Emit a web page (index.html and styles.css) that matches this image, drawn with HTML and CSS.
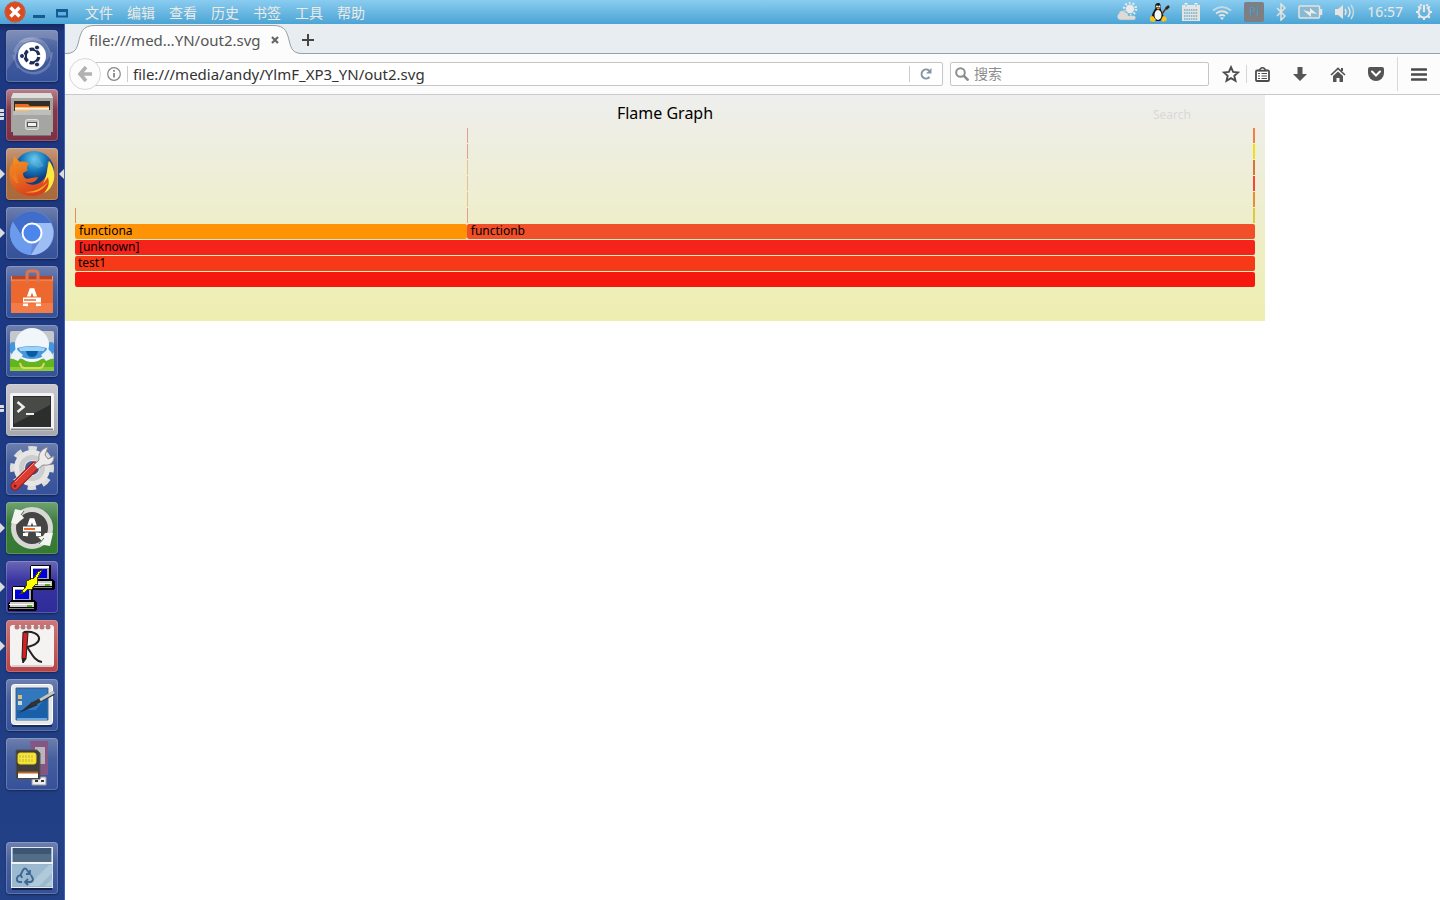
FILE: index.html
```html
<!DOCTYPE html>
<html lang="zh-CN">
<head>
  <meta charset="UTF-8">
  <meta name="viewport" content="width=device-width, initial-scale=1.0">
  <title>Flame Graph</title>
  <link rel="stylesheet" href="styles.css">
</head>
<body>
  <header class="panel">
    <div class="window-controls">
      <button class="win-btn close" aria-label="关闭"><svg width="22" height="22" viewBox="0 0 22 22"><circle cx="11" cy="11" r="10.5" fill="#dc4a20"/><circle cx="11" cy="11" r="10" fill="none" stroke="#b8654c"/><path d="M6.5 6.5l9 9M15.500 6.500l-9 9" stroke="#fff" stroke-width="3.400"/></svg></button>
      <button class="win-btn" aria-label="最小化"><svg width="12" height="14" viewBox="0 0 12 14"><path d="M0 10h12v3H0z" fill="#175a91"/></svg></button>
      <button class="win-btn" aria-label="最大化"><svg width="12" height="14" viewBox="0 0 12 14"><path d="M1 5h10v6.500H1z" fill="#5fb2df" stroke="#175a91" stroke-width="2"/><path d="M0 5.500h12" stroke="#175a91" stroke-width="3"/></svg></button>
    </div>
    <nav class="menus">
      <button>文件</button>
      <button>编辑</button>
      <button>查看</button>
      <button>历史</button>
      <button>书签</button>
      <button>工具</button>
      <button>帮助</button>
    </nav>
    <div class="tray">
      <svg width="22" height="20" viewBox="0 0 22 20"><circle cx="14" cy="7" r="6" fill="none" stroke="#eceae6" stroke-width="2.500" stroke-dasharray="1.700 2.070"/><circle cx="14" cy="7" r="4.200" fill="#eceae6"/><path d="M4 18a3.500 3.500 0 0 1-1-6.500C3 8 8 7.500 9.500 10.500c2 0 3 1.500 2.500 3h6a2.300 2.300 0 0 1 0 4.500z" fill="#dfdbd2" stroke="#6cb7e0" stroke-width=".6"/></svg>
      <svg width="20" height="20" viewBox="0 0 20 20"><path d="M8 1c-3 0-3 3-2.500 5C4 9 2 11 2 14c0 3 3 5 6 5s6-2 5.500-5C13 11 11 9 10.500 6 10.800 3 10.500 1 8 1z" fill="#171717"/><ellipse cx="8" cy="13" rx="3.500" ry="5" fill="#f5f5f5"/><circle cx="7" cy="4.500" r="1" fill="#fff"/><circle cx="9.300" cy="4.500" r="1" fill="#fff"/><path d="M6.500 6l2-.5 1.500 1-2 1.200z" fill="#f3a31f"/><path d="M0 15l3-1 3 4-2 2-4-1zM16 15l-3-1-2 4 2 2 4-2z" fill="#f7c519"/><path d="M12 12l5-7" stroke="#63341d" stroke-width="1.500"/><path d="M16 7l3-3" stroke="#3b2316" stroke-width="2.500"/></svg>
      <svg width="18" height="18" viewBox="0 0 18 18"><path d="M0 2h18v16H0z" fill="#e6e4df"/><path d="M2 7h14M2 10h14M2 13h14M2 16h14" stroke="#6eaed2" stroke-dasharray="1.500 .8" stroke-width="1.500"/><path d="M4 0v4M14 0v4" stroke="#fff" stroke-width="2.500"/><path d="M4 1v3M14 1v3" stroke="#77a9c3"/></svg>
      <svg width="20" height="16" viewBox="0 0 20 16"><g fill="none" stroke="#e7e4dd" stroke-width="1.800"><path d="M1 6.500Q10-.5 19 6.500" stroke="#c4dbe3"/><path d="M4 9.500q6-4.500 12 0M7 12q3-2 6 0"/></g><path d="M8 13.500h4L10 16z" fill="#eee"/></svg>
      <span class="pi">Pi</span>
      <svg width="10" height="18" viewBox="0 0 10 18"><path d="M1 5l8 8-4 4V1l4 4-8 8" fill="none" stroke="#e7e4dd" stroke-width="1.500"/></svg>
      <svg width="25" height="14" viewBox="0 0 25 14"><rect x="1" y="1" width="20.500" height="12" rx="1" fill="#88bad2" stroke="#e7e4dd" stroke-width="1.500"/><path d="M23 4v6" stroke="#e7e4dd" stroke-width="2.500"/><path d="M5 5l7 2V3l7 6-6-1v4z" fill="#f0ede8"/></svg>
      <svg width="20" height="16" viewBox="0 0 20 16"><path d="M0 5h3l5-4v14l-5-4H0z" fill="#e7e4dd"/><g fill="none" stroke="#e7e4dd" stroke-width="1.500"><path d="M10 5q2 3 0 6M13 3q4 5 0 10"/><path d="M16 1q5 7 0 14" stroke="#c4dbe3"/></g></svg>
      <span class="clock">16:57</span>
      <svg width="18" height="18" viewBox="0 0 18 18"><g fill="none" stroke="#eceae6" stroke-width="2"><path d="M6 4.400a5.500 5.500 0 1 0 6 0M9 2v7"/><path d="M1 9h2.500M14.500 9H17M9 14.500V17M3.300 3.300L5 5M13 5l1.700-1.700M3.300 14.700L5 13M13 13l1.700 1.700M5.600 1.200l.8 2M12.400 1.200l-.8 2"/></g></svg>
    </div>
  </header>

  <div class="desktop">
    <aside class="launcher">
      <button class="tile" aria-label="Dash"><svg viewBox="0 0 52 52"><g fill="none" stroke="#c4ccdf" stroke-opacity=".3" stroke-width="1.500"><path d="M8 22C14 2 44 2 45 30M12 38C2 18 20 4 38 12M44 34C34 50 13 46 7 25M46 22c0 22-24 26-34 14"/></g><path d="M1 1h50v10Q20 0 8 30L1 40z" fill="#fff" opacity=".13"/><path d="M12 12a20 20 0 0 1 32 14l-4 6-5-18z" fill="#fff" opacity=".15"/><circle cx="26" cy="26" r="14" fill="#fff"/><circle cx="26" cy="26" r="6.800" fill="none" stroke="#1d2c59" stroke-width="3.300" stroke-dasharray="12 2.240" stroke-dashoffset="-1"/><g fill="#1d2c59" stroke="#fff"><circle cx="16" cy="26" r="2.500"/><circle cx="31" cy="17.500" r="2.500"/><circle cx="31" cy="34.500" r="2.500"/></g></svg></button>
      <button class="tile red" aria-label="文件管理器"><i class="pip triple"></i><svg viewBox="0 0 52 52"><path d="M7 4h38l2 5v34H5V9z" fill="#a3a3a0"/><path d="M7 4h38l2 5H5z" fill="#dededb"/><path d="M8 12h36v12H8z" fill="#332d2a"/><path d="M9 15h13l2 2h19v7H9z" fill="#e96b24"/><path d="M9 18h34v4H9z" fill="#f8bd70"/><path d="M9 19h34v1.500H9z" fill="#faf2e6"/><path d="M7 22h16l3-1h19v26H7z" fill="#a5a5a2"/><path d="M7 22h16l3-1h19v5H7z" fill="#bebebb"/><path d="M7 46.500h38" stroke="#777"/><rect x="19.500" y="30.500" width="13" height="10" rx="2" fill="#bdbdba" stroke="#e2e2df"/><rect x="21.500" y="33.500" width="9" height="4" fill="#f3f3f3" stroke="#555"/></svg></button>
      <button class="tile brown" aria-label="Firefox"><i class="pip"></i><i class="pip active"></i><svg viewBox="0 0 52 52"><defs><radialGradient id="globe" cx=".5" cy=".2"><stop offset="0" stop-color="#65cbec"/><stop offset=".6" stop-color="#1678ba"/><stop offset="1" stop-color="#103d82"/></radialGradient><linearGradient id="fox" x2=".4" y2="1"><stop offset="0" stop-color="#f49a22"/><stop offset="1" stop-color="#d9401d"/></linearGradient></defs><circle cx="28" cy="23" r="20" fill="url(#globe)"/><path d="M30 6q-6 5-5 10l7 4 6-2 4 6" fill="#74bddf" opacity=".35"/><path d="M42 13c7 8 8 22-3 31-10 7-25 5-32-5C2 30 2 19 7 14l1-6 6 6c4-1 8 0 9 2-2 1-3 5-1 6l-5 3c0 5 4 7 8 5l7-1c-1 5-8 7-13 5 9 7 20-1 22-8z" fill="url(#fox)"/><path d="M43 13c9 11 6 27-5 32 6-7 5-11 4-16l-5 7c4-8 4-14 6-23z" fill="#ffe83f"/><path d="M42 34c-5 9-13 12-23 10 11 0 18-5 23-10z" fill="#f3a724"/><path d="M7 15c-3 8-1 15 5 20M12 16c-4 5-4 12-1 16" fill="none" stroke="#ee7b22" stroke-width="2"/></svg></button>
      <button class="tile" aria-label="Chromium"><i class="pip"></i><svg viewBox="0 0 52 52"><circle cx="26" cy="26" r="22" fill="#6389db"/><path d="M7 15A22 22 0 0 1 45 16H26L16 29z" fill="#3f6dc9"/><path d="M7 15l10 16 9 5-1 12A22 22 0 0 1 7 15z" fill="#6b9bec"/><path d="M45 16H26l10 10-3 9-8 13A22 22 0 0 0 45 16z" fill="#9dbdf5"/><circle cx="26" cy="26" r="9.500" fill="#4c86ed" stroke="#fff" stroke-width="2"/></svg></button>
      <button class="tile" aria-label="Ubuntu 软件"><svg viewBox="0 0 52 52"><path d="M5 10h42l-2 5H7z" fill="#be451e"/><path d="M5 14h42v33H5z" fill="#ed682e"/><path d="M5 37h42v10H5z" fill="#f37c46"/><path d="M5 14h42M5.500 10v5M46.500 10v5" stroke="#f7956a"/><path d="M21 17V8q0-3 3-3h5q3 0 3 3v9" fill="none" stroke="#df754f" stroke-width="3"/><g fill="none" stroke="#fff" stroke-width="3.500"><path d="M19.500 40l5.500-16h2l5.500 16"/><path d="M17 38.500h5M30 38.500h5" stroke-width="3"/></g><path d="M17 34h18" stroke="#ed682e" stroke-width="7"/><path d="M17 34h18" stroke="#fff" stroke-width="5"/><path d="M18 34h12" stroke="#ed682e" stroke-width="1.500"/></svg></button>
      <button class="tile" aria-label="优客助手"><svg viewBox="0 0 52 52"><rect x="4" y="6" width="44" height="40" rx="2" fill="#c4c8cc"/><path d="M4 34h44v12H4z" fill="#61b51e"/><path d="M4 42h44v4H4z" fill="#8ccc35"/><rect x="4" y="17" width="6" height="12" rx="3" fill="#4296df"/><rect x="42" y="17" width="6" height="12" rx="3" fill="#4296df"/><ellipse cx="26" cy="20" rx="17" ry="17" fill="#f1f6fa"/><path d="M11 23q15-4 30 0-1 11-15 11T11 23z" fill="#4697db"/><path d="M13 23q13-3 26 0l-1 3H14z" fill="#9dd3f8"/><path d="M20 26h12q-1 6-6 6t-6-6z" fill="#075c9f"/><path d="M10 24q-5 4-5 9l7 3 5-6zM42 24q5 4 5 9l-7 3-5-6z" fill="#eaf3fb"/><path d="M14 38q1 5 5 5h14q4 0 5-5" fill="none" stroke="#e2d568" stroke-width="2"/></svg></button>
      <button class="tile gray" aria-label="终端"><i class="pip double"></i><svg viewBox="0 0 52 52"><rect x="4" y="9" width="44" height="38" rx="2" fill="#f3f3f3"/><path d="M5 45.500h42" stroke="#888" stroke-width="2"/><path d="M7 12h38v31H7z" fill="#2c2e2d"/><path d="M8 13h36v8L8 40z" fill="#484a48"/><path d="M11.500 18l6 5-6 5" fill="none" stroke="#eee" stroke-width="2.500"/><path d="M20 30h8" stroke="#eee" stroke-width="2"/></svg></button>
      <button class="tile" aria-label="系统设置"><svg viewBox="0 0 52 52"><circle cx="26" cy="25" r="18.500" fill="none" stroke="#dededc" stroke-width="7" stroke-dasharray="8 6.530" stroke-dashoffset="4"/><circle cx="26" cy="25" r="12.500" fill="none" stroke="#e6e6e4" stroke-width="11"/><circle cx="26" cy="25" r="10.500" fill="none" stroke="#cbcdce" stroke-width="5"/><path d="M29 23L9 43" stroke="#8e1818" stroke-width="9" stroke-linecap="round"/><path d="M29 23L9 43" stroke="#dc3c32" stroke-width="7" stroke-linecap="round"/><path d="M28 20L9 39" stroke="#fb9186"/><path d="M28 22l5-5c-1-6 2-11 9-13l-3 8 3 4 6-3c0 7-4 10-11 9l-5 4z" fill="#ecebea" stroke="#8b8b8b"/><circle cx="9" cy="43" r="1.500" fill="#821716"/></svg></button>
      <button class="tile green" aria-label="软件更新器"><i class="pip"></i><svg viewBox="0 0 52 52"><circle cx="26" cy="26" r="18.500" fill="#454545" stroke="#d7d7d4" stroke-width="5"/><path d="M5 21l4-14 9 2-3 3 3 4-4 3-3 3zM47 31l-3 13-12-2 4-3-4-4 5-1 2-3z" fill="#f3f3f1"/><path d="M18 9l-3 4M33 42l5-6" stroke="#3b793b"/><g fill="none" stroke="#fff" stroke-width="3.500"><path d="M19.500 34l5.500-16h2l5.500 16"/><path d="M17 32.500h5M30 32.500h5" stroke-width="3"/></g><path d="M17 27h18" stroke="#454545" stroke-width="7"/><path d="M17 27h18" stroke="#fff" stroke-width="5"/><path d="M18 27h11" stroke="#f06a22" stroke-width="2"/></svg></button>
      <button class="tile violet" aria-label="PuTTY"><i class="pip"></i><svg viewBox="0 0 52 52" shape-rendering="crispEdges"><g id="pc"><path d="M24 5l1-1h20v14h2l2 3v6l-2 2H20v-8l4-3z" fill="#000"/><path d="M25 5h18v13H25z" fill="#fff"/><path d="M27 7h16v11H27z" fill="#aaa"/><path d="M27 8h14v9H27z" fill="#0000dc"/><path d="M22 20h24v5H22z" fill="#ccc"/><path d="M21 22h24" stroke="#fff"/><path d="M21 26.500h25" stroke="#888"/><path d="M39 24h5" stroke="#4cad20" stroke-width="2"/></g><use href="#pc" x="-18" y="21"/><path d="M36 9l-4 2-4 6-8 3 1 4-7 9 5-2 2-2 5-1 3-4 3-1-1-5z" fill="#ff0" stroke="#484800"/></svg></button>
      <button class="tile crimson" aria-label="R 编辑器"><i class="pip"></i><svg viewBox="0 0 52 52"><rect x="4" y="5" width="44" height="42" rx="3" fill="#f4f3f1"/><path d="M6 46h40" stroke="#d5d0ce" stroke-width="2"/><g fill="#b77777"><circle cx="11" cy="7" r="2.500"/><circle cx="17" cy="7" r="2.500"/><circle cx="23" cy="7" r="2.500"/><circle cx="30" cy="7" r="2.500"/><circle cx="36" cy="7" r="2.500"/><circle cx="42" cy="7" r="2.500"/></g><path d="M18 12c18-2 21 12 3 15 4 5 7 14 15 15" fill="none" stroke="#222" stroke-width="2"/><path d="M17 12l5 1-2 26-3 4-1-5z" fill="#d91f1e" stroke="#222"/><path d="M16 38h4l-3 5z" fill="#222"/></svg></button>
      <button class="tile" aria-label="桌面设置"><svg viewBox="0 0 52 52"><rect x="5.500" y="5.500" width="41" height="40" rx="3" fill="#e4e8ea" stroke="#fff"/><path d="M6 47h40" stroke="#182d50" stroke-width="2"/><path d="M10 9h32v32H10z" fill="#1a5faa" stroke="#4c6a8a"/><path d="M11 10h30v7L30 31H11z" fill="#488bcf" opacity=".55"/><path d="M11 40h30" stroke="#6ba5dd" stroke-width="2"/><path d="M12 16h4v4h-4z" fill="#e6ba6c"/><path d="M12 22h4v4h-4z" fill="#d8d6d0"/><path d="M13 34l13-11 6 3z" fill="#252e38"/><path d="M25 26l23-12" stroke="#333" stroke-width="4"/><path d="M34 21l14-8" stroke="#c5c8c9" stroke-width="3"/></svg></button>
      <button class="tile" aria-label="存储设备"><svg viewBox="0 0 52 52"><path d="M24 3h18v34H28z" fill="#855683"/><path d="M29 9h10v17H29z" fill="#b9b5bb"/><path d="M26 39h14v8H26z" fill="#efefef" stroke="#999"/><path d="M29 43h3M35 43h3" stroke="#333" stroke-width="2"/><path d="M10 12h21l3 3v26H10z" fill="#3d3d3d" stroke="#555"/><rect x="12" y="15" width="18" height="11" rx="2" fill="#f6e641" stroke="#f2cf18"/><path d="M14 17v7M17 17v7M20 17v7M23 17v7M26 17v7" stroke="#c0b331" stroke-dasharray="3 1"/><path d="M12 34h20v6H12z" fill="#fff"/><path d="M12 34.500h20" stroke="#b76622" stroke-width="2"/></svg></button>
      <button class="tile trash" aria-label="回收站"><svg viewBox="0 0 52 52"><path d="M6 47h40" stroke="#152142" stroke-width="2"/><rect x="5.500" y="5.500" width="41" height="40" fill="#9bb4cb" stroke="#dfeaf2"/><path d="M7 6h38v14H7z" fill="#536d86"/><path d="M7 6h38v6H7z" fill="#3d5773"/><path d="M5 21h42" stroke="#eef4f9" stroke-width="2"/><path d="M6 23h40v21H6z" fill="#9bb9cf"/><path d="M22 44l21-21h4v7L33 44zM39 44l8-8v8z" fill="#bdd2e1" opacity=".65"/><path d="M14 34l3-6q2-3 4 0l2 3m2 2l2 4q0 3-3 3h-4m-4 0h-3q-3-1-2-4l1-2M12 34l3-1 1 3M24 28v4h-4M22 37l-3 3 3 3" fill="none" stroke="#3f6794" stroke-width="1.800"/></svg></button>
    </aside>

    <main class="browser">
      <div class="tab-strip">
        <div class="tab">
          <svg class="tab-shape" width="240" height="30" viewBox="0 0 240 30"><path d="M0 30V29.500C8 29.500 11 27 13 20C16 8 17 1.500 30 1.500H208C221 1.500 222 8 225 20C227 27 230 29.500 238 29.500H240V30z" fill="#fcfcfc"/><path d="M0 29.500C8 29.500 11 27 13 20C16 8 17 1.500 30 1.500H208C221 1.500 222 8 225 20C227 27 230 29.500 238 29.500H240" fill="none" stroke="#96a0a6"/></svg>
          <span class="tab-title">file:///med…YN/out2.svg</span>
          <button class="tab-close" aria-label="关闭标签页"><svg width="8" height="8" viewBox="0 0 8 8"><path d="M1 1l6 6M7 1L1 7" stroke="#666" stroke-width="2.200"/></svg></button>
        </div>
        <button class="new-tab" aria-label="新建标签页"><svg width="12" height="12" viewBox="0 0 12 12"><path d="M6 0v12M0 6h12" stroke="#444" stroke-width="2"/></svg></button>
      </div>

      <div class="toolbar">
        <button class="back" aria-label="后退"><svg width="14" height="16" viewBox="0 0 14 16"><path d="M8 1L2 8l6 7M2 8h12" fill="none" stroke="#b1b1b1" stroke-width="3.600"/></svg></button>
        <div class="url-bar">
          <button class="info" aria-label="网站信息"><svg width="14" height="14" viewBox="0 0 14 14"><circle cx="7" cy="7" r="6.300" fill="none" stroke="#858585" stroke-width="1.200"/><path d="M7 6v4.500M7 3v1.700" stroke="#777" stroke-width="1.600"/></svg></button>
          <input class="url" type="text" aria-label="网址" value="file:///media/andy/YlmF_XP3_YN/out2.svg">
          <button class="reload" aria-label="刷新"><svg width="12" height="12" viewBox="0 0 12 12"><path d="M9.500 9A4.500 4.500 0 1 1 9 2.600" fill="none" stroke="#8594a3" stroke-width="2"/><path d="M11.500 0v5.500H6z" fill="#8594a3"/></svg></button>
        </div>
        <div class="search-bar">
          <svg width="14" height="14" viewBox="0 0 14 14"><circle cx="5.500" cy="5.500" r="4.300" fill="none" stroke="#8d8d8d" stroke-width="2"/><path d="M8.500 8.500l5 5" stroke="#8d8d8d" stroke-width="2.500"/></svg>
          <input type="text" aria-label="搜索" placeholder="搜索">
        </div>
        <button class="tool star" aria-label="收藏"><svg width="18" height="18" viewBox="0 0 18 18"><path d="M9 2.200l2.100 4.700 5 .5-3.800 3.400 1.200 5L9 13.200 4.500 15.800l1.200-5L1.900 7.400l5-.5z" fill="none" stroke="#4c4c4c" stroke-width="1.900"/></svg></button>
        <button class="tool list" aria-label="书签列表"><svg width="15" height="15" viewBox="0 0 15 15"><rect x="1" y="3.500" width="13" height="10.500" rx="1" fill="#fff" stroke="#4c4c4c" stroke-width="1.800"/><path d="M3.500 3.500Q5 3 5.500 1.500q2-1.500 4 0Q10 3 11.500 3.500z" fill="#fff" stroke="#4c4c4c" stroke-width="1.500"/><path d="M3 6.500h2M3 9h2M3 11.500h2M6.500 6.500H12M6.500 9H12M6.500 11.500H12" stroke="#4c4c4c"/></svg></button>
        <button class="tool" aria-label="下载"><svg width="14" height="14" viewBox="0 0 14 14"><path d="M4.500 0h5v7H14l-7 7-7-7h4.500z" fill="#555"/></svg></button>
        <button class="tool" aria-label="主页"><svg width="16" height="15" viewBox="0 0 16 15"><path d="M1 8l7-6.500L15 8" fill="none" stroke="#555" stroke-width="1.700"/><path d="M3 9l5-4.500L13 9v6H9.500v-4h-3v4H3z" fill="#555"/><path d="M11 1h2v3h-2z" fill="#555"/></svg></button>
        <button class="tool" aria-label="Pocket"><svg width="16" height="14" viewBox="0 0 16 14"><path d="M2 0h12q2 0 2 2v4a8 8 0 0 1-16 0V2q0-2 2-2z" fill="#555"/><path d="M4 4.500l4 4 4-4" fill="none" stroke="#fff" stroke-width="2" stroke-linecap="round"/></svg></button>
        <button class="tool menu" aria-label="打开菜单"><svg width="16" height="13" viewBox="0 0 16 13"><path d="M1 1.500h14M1 6.500h14M1 11.500h14" stroke="#4a4a4a" stroke-width="2.600" stroke-linecap="round"/></svg></button>
      </div>

      <section class="page">
        <div class="graph">
          <div class="graph-head">
            <h1>Flame Graph</h1>
            <button class="graph-search">Search</button>
          </div>
          <div class="stacks">
            <div class="row"><i class="thin b rose"></i><i class="thin c orange"></i></div>
            <div class="row"><i class="thin b rose"></i><i class="thin c yellow"></i></div>
            <div class="row"><i class="thin b peach"></i><i class="thin c rust"></i></div>
            <div class="row"><i class="thin b peach"></i><i class="thin c scarlet"></i></div>
            <div class="row"><i class="thin b peach"></i><i class="thin c amber"></i></div>
            <div class="row"><i class="thin a"></i><i class="thin b rose"></i><i class="thin c gold"></i></div>
            <div class="row"><div class="frame functiona">functiona</div><div class="frame functionb">functionb</div></div>
            <div class="row"><div class="frame unknown">[unknown]</div></div>
            <div class="row"><div class="frame test1">test1</div></div>
            <div class="row"><div class="frame all"></div></div>
          </div>
        </div>
      </section>
    </main>
  </div>
</body>
</html>
```

FILE: styles.css
```css
* {
  box-sizing: border-box;
}

body {
  margin: 0;
  min-height: 100vh;
  display: flex;
  flex-direction: column;
  background: #fff;
  font-family: "Noto Sans", "Noto Sans CJK SC", sans-serif;
  font-size: 14px;
  color: #444;
}

button {
  display: flex;
  align-items: center;
  justify-content: center;
  padding: 0;
  border: none;
  background: none;
  color: inherit;
  font: inherit;
}

input {
  min-width: 0;
  padding: 0;
  border: none;
  outline: none;
  background: none;
  font: inherit;
}

svg {
  display: block;
  flex-shrink: 0;
}

/* top panel */
.panel {
  display: flex;
  align-items: center;
  height: 24px;
  padding: 0 7px 0 4px;
  background: linear-gradient(#8accf0, #4ba4d5);
  color: #eceae4;
}

.window-controls {
  display: flex;
  align-items: center;
  gap: 11px;
}

.win-btn.close {
  margin-right: -4px;
}

.menus {
  display: flex;
  gap: 14px;
  margin-left: 17px;
  padding-top: 2px;
  line-height: 22px;
}

.tray {
  display: flex;
  align-items: center;
  gap: 12px;
  margin-left: auto;
}

.pi {
  width: 20px;
  height: 20px;
  border-radius: 2px;
  background: #7d7f82;
  color: #4a9bc8;
  font-size: 12px;
  line-height: 20px;
  text-align: center;
}

.clock {
  line-height: 24px;
}

.desktop {
  display: flex;
  flex: 1;
}

/* launcher */
.launcher {
  display: flex;
  flex-direction: column;
  gap: 7px;
  width: 65px;
  flex-shrink: 0;
  padding: 6px;
  border-right: 1px solid #3f63bd;
  background: linear-gradient(#14265c, #1d3780 8px, #1d3983 50%, #234186);
}

.tile {
  position: relative;
  width: 52px;
  height: 52px;
  flex-shrink: 0;
  border-radius: 4px;
  background: linear-gradient(#6e7fae, #465f9f 40%, #35519a);
  box-shadow: inset 0 0 0 1px rgba(255, 255, 255, 0.2), 0 1px 2px rgba(0, 0, 0, 0.4);
}

.tile svg {
  width: 52px;
  height: 52px;
}

.tile.red {
  background: linear-gradient(#b8838c, #84384b 40%, #7e3046);
}

.tile.brown {
  background: linear-gradient(#c69a7c, #ad7147 40%, #a9693a);
}

.tile.gray {
  background: linear-gradient(#c9c9ce, #a6a7b0);
}

.tile.green {
  background: linear-gradient(#71a273, #3c7b3d 40%, #357931);
}

.tile.violet {
  background: linear-gradient(#6a68b5, #3632a0 40%, #2f2c99);
}

.tile.crimson {
  background: linear-gradient(#cc7779, #b64347);
}

.tile.trash {
  margin-top: auto;
}

/* running and focused window marks */
.pip {
  position: absolute;
  top: 21px;
  left: -6px;
  border: 5px solid transparent;
  border-left-color: #dcdcdc;
  border-right: none;
}

.pip.active {
  left: auto;
  right: -6px;
  border: 5px solid transparent;
  border-right-color: #dcdcdc;
  border-left: none;
}

.pip.double,
.pip.triple {
  width: 4px;
  height: 7px;
  border: none;
  border-radius: 0 1px 1px 0;
  background: repeating-linear-gradient(#dcdcdc 0 3px, transparent 3px 4px);
}

.pip.triple {
  top: 20px;
  height: 11px;
}

/* browser */
.browser {
  display: flex;
  flex-direction: column;
  flex: 1;
  min-width: 0;
}

.tab-strip {
  display: flex;
  height: 30px;
  border-bottom: 1px solid #96a0a6;
  background: #e8edf1;
}

.tab {
  position: relative;
  display: flex;
  align-items: center;
  justify-content: space-between;
  width: 240px;
  height: 30px;
  padding: 2px 26px 0 24px;
}

.tab-shape {
  position: absolute;
  top: 0;
  left: 0;
}

.tab-title,
.tab-close {
  position: relative;
}

.tab-title {
  color: #555;
  font-size: 15px;
  line-height: 20px;
}

.new-tab {
  padding-top: 2px;
  margin-left: -3px;
}

.toolbar {
  display: flex;
  align-items: center;
  height: 41px;
  padding-left: 4px;
  border-bottom: 1px solid #c9c9c9;
  background: #fcfcfc;
}

.back {
  position: relative;
  width: 32px;
  height: 32px;
  flex-shrink: 0;
  border: 1px solid #d8d8d8;
  border-radius: 50%;
  background: #fcfcfc;
}

.url-bar,
.search-bar {
  display: flex;
  align-items: center;
  height: 24px;
  border: 1px solid #c6c6c6;
  border-radius: 2px;
  background: #fff;
}

.url-bar {
  flex: 1;
  margin-left: -16px;
  padding-left: 21px;
}

.info {
  height: 16px;
  padding-right: 6px;
  border-right: 1px solid #ccc;
}

.url {
  flex: 1;
  height: 22px;
  padding-left: 5px;
  color: #333;
  font-size: 15px;
}

.reload {
  width: 33px;
  height: 16px;
  border-left: 1px solid #ccc;
}

.search-bar {
  width: 259px;
  margin: 0 7px;
  padding-left: 4px;
  gap: 5px;
}

.search-bar input {
  flex: 1;
  height: 22px;
  padding-bottom: 2px;
}

.search-bar input::placeholder {
  color: #8d8d8d;
}

.tool {
  width: 38px;
  height: 40px;
  flex-shrink: 0;
}

.tool.star {
  width: 30px;
}

.tool.list {
  width: 35px;
  height: 18px;
  padding-right: 3px;
  border-left: 1px solid #d5d5d5;
}

.tool.menu {
  width: 43px;
  height: 34px;
  margin-left: 2px;
  border-left: 1px solid #d9d9d9;
}

/* flame graph */
.page {
  flex: 1;
}

.graph {
  max-width: 1200px;
  padding: 0 10px 33px;
  background: linear-gradient(#eeeeee, #eeeeb0);
  color: #000;
}

.graph-head {
  display: grid;
  grid-template-columns: 1fr auto 1fr;
  align-items: baseline;
  height: 33px;
  padding-top: 6px;
}

.graph-head h1 {
  grid-column: 2;
  margin: 0;
  font-size: 16px;
  font-weight: normal;
  line-height: 24px;
}

.graph-search {
  justify-self: end;
  margin-right: 64px;
  color: #d9d9d7;
  font-size: 12px;
}

.row {
  display: grid;
  grid-template-columns: 1px calc(33.2% - 1px) 1px 1fr 2px;
  height: 16px;
  padding-bottom: 1px;
}

.frame {
  grid-column: 1 / -1;
  padding-left: 4px;
  border-radius: 2px;
  font-size: 12px;
  line-height: 14px;
}

.functiona {
  grid-column: 1 / 3;
  background: #ff9205;
}

.functionb {
  grid-column: 3 / -1;
  background: #f04f29;
}

.unknown {
  background: #f5241b;
}

.test1 {
  padding-left: 3px;
  background: #f63916;
}

.all {
  background: #f4180e;
}

.thin.a {
  grid-column: 1;
  background: #e09055;
}

.thin.b {
  grid-column: 3;
}

.thin.c {
  grid-column: 5;
}

.rose {
  background: #e2a08c;
}

.peach {
  background: #ecc08b;
}

.orange {
  background: #f38045;
}

.yellow {
  background: #f2df13;
}

.rust {
  background: #dc7530;
}

.scarlet {
  background: #fa4630;
}

.amber {
  background: #e98d2e;
}

.gold {
  background: #e0c83c;
}
```
